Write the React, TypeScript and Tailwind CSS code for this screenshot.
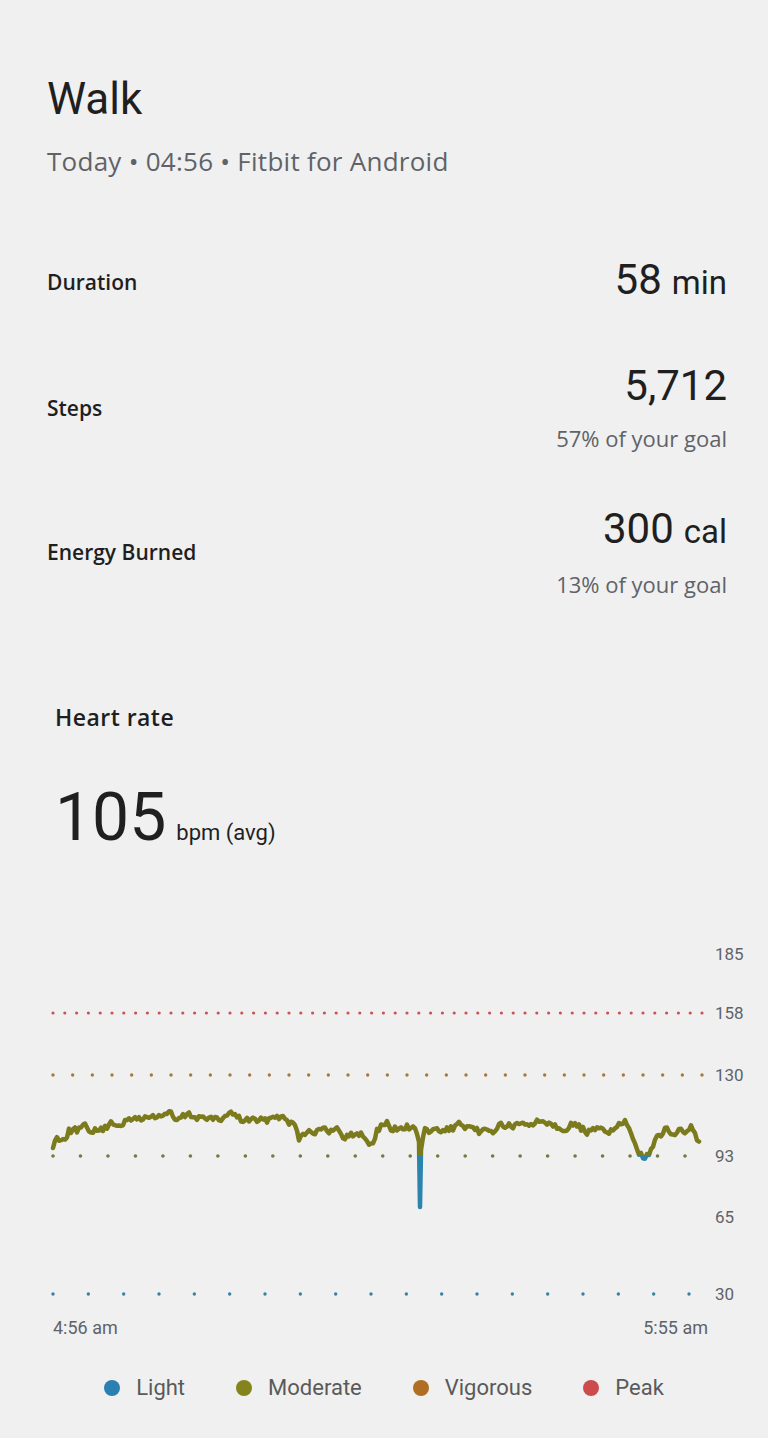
import React from "react"

const font = { fontFamily: "Roboto, 'Liberation Sans', sans-serif" }
const sans = { fontFamily: "'Open Sans', Roboto, sans-serif" }

// deterministic jitter for the heart-rate trace
function makeRandom(seed: number) {
  let s = seed
  return () => {
    s = (s * 1103515245 + 12345) % 2147483648
    return s / 2147483648
  }
}

const anchors: [number, number][] = [
  [53, 1148], [56, 1137], [64, 1138], [69, 1130], [78, 1130], [86, 1128],
  [98, 1131], [108, 1127], [118, 1122], [128, 1122], [137, 1118], [147, 1118],
  [157, 1116], [169, 1113], [176, 1121], [186, 1116], [196, 1116], [206, 1118],
  [216, 1121], [233, 1113], [240, 1120], [255, 1120], [265, 1122], [277, 1113],
  [289, 1123], [294, 1118], [299, 1137], [304, 1132], [314, 1130], [324, 1132],
  [338, 1130], [343, 1135], [363, 1135], [368, 1145], [373, 1143], [377, 1128],
  [387, 1123], [392, 1130], [407, 1126], [414, 1130], [417, 1134], [419, 1142],
  [420, 1207], [421, 1150], [424, 1131], [441, 1132], [461, 1125], [471, 1132],
  [490, 1132], [500, 1125], [520, 1127], [529, 1123], [549, 1120], [559, 1127],
  [573, 1125], [588, 1132], [608, 1130], [625, 1123], [632, 1140], [637, 1150],
  [641, 1153], [644, 1161], [647, 1154], [650, 1148], [664, 1130], [671, 1132],
  [686, 1132], [691, 1127], [696, 1140], [699, 1138],
]

function buildTrace() {
  const rand = makeRandom(7)
  const pts: string[] = []
  let noise = 0
  let i = 0
  for (let x = 53; x <= 699; x += 2) {
    while (i < anchors.length - 2 && anchors[i + 1][0] < x) i++
    const [x0, y0] = anchors[i]
    const [x1, y1] = anchors[i + 1]
    const t = x1 === x0 ? 0 : Math.min(1, Math.max(0, (x - x0) / (x1 - x0)))
    let y = y0 + (y1 - y0) * t
    noise = noise * 0.4 + (rand() * 2 - 1) * 3.6
    const calm = Math.abs(x - 420) < 5 || Math.abs(x - 644) < 5 || x < 58
    if (!calm) y += noise
    if (x === 419) {
      pts.push(`${x},${y.toFixed(1)}`)
      pts.push(`420,1207`)
      continue
    }
    pts.push(`${x},${y.toFixed(1)}`)
  }
  return "M" + pts.join(" L")
}

const trace = buildTrace()

function dots(from: number, to: number, count: number) {
  const step = (to - from) / (count - 1)
  return Array.from({ length: count }, (_, k) => from + k * step)
}

const zones = [
  { y: 1013, color: "#c8545a", xs: dots(53, 702, 56), r: 1.6 },
  { y: 1075, color: "#a87a34", xs: dots(53, 702, 34), r: 1.7 },
  { y: 1156, color: "#76783e", xs: dots(53, 685, 24), r: 1.8 },
  { y: 1294, color: "#3a7fa2", xs: dots(53, 689, 19), r: 1.7 },
]

const axis = [
  { v: "185", y: 954 },
  { v: "158", y: 1013 },
  { v: "130", y: 1075 },
  { v: "93", y: 1156 },
  { v: "65", y: 1217 },
  { v: "30", y: 1294 },
]

function StatRow({
  label,
  value,
  unit,
  sub,
  className,
}: {
  label: string
  value: string
  unit?: string
  sub?: string
  className?: string
}) {
  return (
    <div className={`flex items-center justify-between ${className ?? ""}`}>
      <span className="text-[21px] leading-[28px] font-semibold text-[#1f1f1f]" style={sans}>
        {label}
      </span>
      <div className="flex flex-col items-end">
        <div className="flex items-baseline gap-[10px] text-[#1f1f1f]">
          <span className="text-[42px] leading-[46px]">{value}</span>
          {unit && <span className="text-[33px] leading-[46px]">{unit}</span>}
        </div>
        {sub && (
          <span className="mt-[15px] text-[22px] leading-[28px] text-[#5f6368]" style={sans}>
            {sub}
          </span>
        )}
      </div>
    </div>
  )
}

function HeartChart() {
  return (
    <svg className="block mt-[74px]" width={768} height={385} viewBox="0 925 768 385">
      <defs>
        <clipPath id="above">
          <rect x="0" y="925" width="768" height="231" />
        </clipPath>
        <clipPath id="below">
          <rect x="0" y="1156" width="768" height="160" />
        </clipPath>
      </defs>
      {zones.map((z) =>
        z.xs.map((x, k) => <circle key={`${z.y}-${k}`} cx={x} cy={z.y} r={z.r} fill={z.color} />)
      )}
      <path
        d={trace}
        fill="none"
        stroke="#7b7a1d"
        strokeWidth={4.5}
        strokeLinejoin="round"
        strokeLinecap="round"
        clipPath="url(#above)"
      />
      <path
        d={trace}
        fill="none"
        stroke="#2b84ae"
        strokeWidth={4.5}
        strokeLinejoin="round"
        strokeLinecap="round"
        clipPath="url(#below)"
      />
      {axis.map((a) => (
        <text
          key={a.v}
          x={715}
          y={a.y}
          dominantBaseline="central"
          fontSize={17}
          fill="#5f6368"
          fontFamily="Roboto, sans-serif"
        >
          {a.v}
        </text>
      ))}
    </svg>
  )
}

const legend = [
  { name: "Light", color: "bg-[#2a80b0]" },
  { name: "Moderate", color: "bg-[#85841c]" },
  { name: "Vigorous", color: "bg-[#b06d24]" },
  { name: "Peak", color: "bg-[#cc4b4d]" },
]

export default function App() {
  return (
    <div className="min-h-screen bg-[#f0f0f0] pb-10" style={font}>
      <div className="pl-[47px] pr-[41px] pt-[73px]">
        <h1 className="text-[44px] leading-[52px] text-[#1f1f1f]">Walk</h1>
        <p className="mt-[20px] text-[26px] leading-[32px] tracking-[0.01em] text-[#5f6368]" style={sans}>
          Today • 04:56 • Fitbit for Android
        </p>

        <StatRow className="mt-[80px]" label="Duration" value="58" unit="min" />
        <StatRow className="mt-[57px]" label="Steps" value="5,712" sub="57% of your goal" />
        <StatRow className="mt-[54px]" label="Energy Burned" value="300" unit="cal" sub="13% of your goal" />
      </div>

      <div className="pl-[55px] mt-[105px]">
        <h2 className="text-[23px] leading-[28px] font-semibold tracking-[0.02em] text-[#1f1f1f]" style={sans}>
          Heart rate
        </h2>
        <div className="mt-[54px] flex items-baseline gap-[10px] text-[#1f1f1f]">
          <span className="text-[66px] leading-[66px]">105</span>
          <span className="text-[22px] leading-[28px]">bpm (avg)</span>
        </div>
      </div>

      <HeartChart />

      <div className="mt-[7px] flex justify-between pl-[53px] pr-[60px] text-[18px] leading-[22px] text-[#5f6368]">
        <span>4:56 am</span>
        <span>5:55 am</span>
      </div>

      <div className="mt-[35px] flex justify-center gap-[51px]">
        {legend.map((l) => (
          <div key={l.name} className="flex items-center gap-[16px]">
            <span className={`w-[16px] h-[16px] rounded-full ${l.color}`} />
            <span className="text-[22px] leading-[28px] text-[#5a5a5a]">{l.name}</span>
          </div>
        ))}
      </div>
    </div>
  )
}
